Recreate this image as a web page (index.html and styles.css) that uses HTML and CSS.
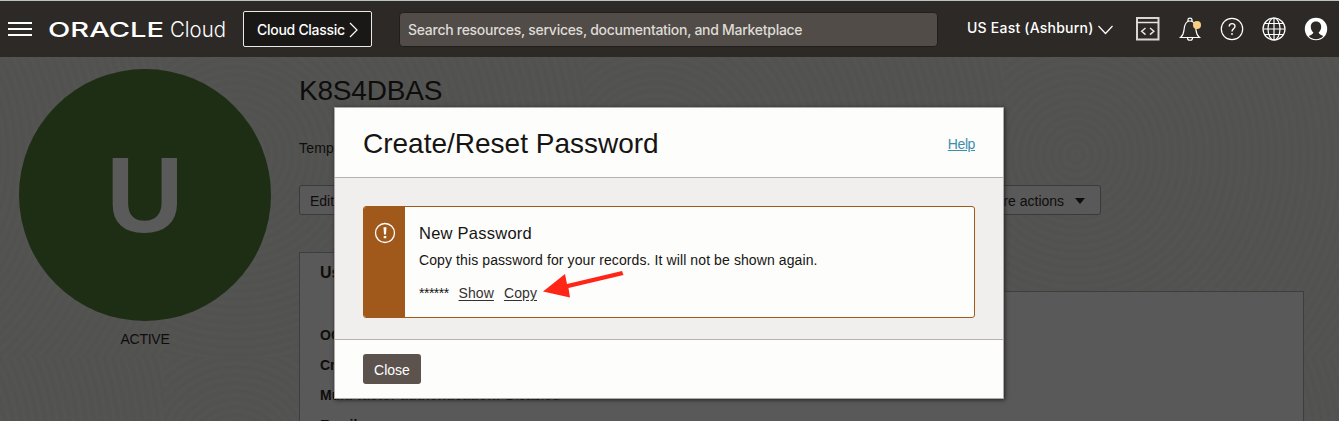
FILE: index.html
```html
<!DOCTYPE html>
<html lang="en">
<head>
<meta charset="utf-8">
<title>Oracle Cloud - K8S4DBAS</title>
<link rel="stylesheet" href="styles.css">
</head>
<body>
<header class="topbar">
  <svg class="menu" width="24" height="16" viewBox="0 0 24 16"><path d="M0 1h24M0 7h24M0 13h24" stroke="#fff" stroke-width="2"/></svg>
  <svg class="logo" width="178" height="24" viewBox="0 0 178 24">
    <text class="logo-oracle" x="-1" y="19" textLength="116" lengthAdjust="spacingAndGlyphs">ORACLE</text>
    <text class="logo-cloud" x="121" y="19" textLength="56" lengthAdjust="spacingAndGlyphs">Cloud</text>
  </svg>
  <button class="classic"><span class="classic-label">Cloud Classic</span><svg width="9" height="16" viewBox="0 0 9 16"><path d="M1 1l7 7-7 7" fill="none" stroke="#fff" stroke-width="1.2"/></svg></button>
  <div class="search"><span class="search-label">Search resources, services, documentation, and Marketplace</span></div>
  <div class="tools">
    <div class="region"><span class="region-label">US East (Ashburn)</span><svg class="chevron" width="15" height="10" viewBox="0 0 15 10"><path d="M.5 1l7 7.500L14.500 1" fill="none" stroke="#fff" stroke-width="1.2"/></svg></div>
    <svg class="tool" width="24" height="24" viewBox="0 0 24 24" fill="none"><path d="M1 1h21.500v21.500H1z" stroke="#d8d7d5" stroke-width="2"/><path d="M1 5.500h22M9.500 11l-3.800 3.300 3.800 3.300M14 11l3.800 3.300-3.800 3.300" stroke="#e6e5e3" stroke-width="1.500"/></svg>
    <svg class="tool" width="24" height="24" viewBox="0 0 24 24" fill="none" stroke="#fff" stroke-width="1.200"><path d="M2.500 20.500h19c-2.500-2-3.200-4-3.500-7.500C17.600 7.500 15.800 4 12 4S6.400 7.500 6 13c-.3 3.500-1 5.500-3.500 7.500zM10 4V2.500Q10 1.200 12 1.200T14 2.500V4M9.500 21c0 3 5 3 5 0"/><circle cx="19" cy="8" r="4" fill="#f8cf82" stroke="none"/></svg>
    <svg class="tool" width="24" height="24" viewBox="0 0 24 24" fill="none" stroke="#fff"><circle cx="12" cy="12" r="10.700" stroke-width="1.200"/><path d="M9.200 9.500C9.200 5.600 15 5.800 15 9.200c0 2.500-3 2.600-3 5.300" stroke-width="1.400"/><circle cx="12" cy="17" r=".9" fill="#fff" stroke="none"/></svg>
    <svg class="tool" width="24" height="24" viewBox="0 0 24 24" fill="none" stroke="#fff" stroke-width="1.200"><circle cx="12" cy="12" r="11"/><ellipse cx="12" cy="12" rx="6" ry="11"/><path d="M12 1v22M1 12h22M3 6.500h18M3 17.500h18"/></svg>
    <svg class="tool" width="24" height="24" viewBox="0 0 24 24"><circle cx="12" cy="12" r="11.200" fill="#fff"/><path d="M12 4.500c-3.700 0-5.200 2.500-5.200 5.300 0 2.400 1 4.500 2.600 5.700-.2 1.700-2.600 2.200-4.600 3.500 3 4.200 11.400 4.200 14.400 0-2-1.300-4.400-1.800-4.600-3.500 1.600-1.200 2.600-3.300 2.600-5.700 0-2.800-1.500-5.300-5.200-5.300z" fill="#2d2926"/></svg>
  </div>
</header>
<main class="page">
  <div class="texture"></div>
  <aside class="profile">
    <div class="avatar"><span class="initial">U</span></div>
    <div class="status">ACTIVE</div>
  </aside>
  <section class="details">
    <h1 class="name">K8S4DBAS</h1>
    <p class="description">Temp</p>
    <div class="actions"><button class="btn">Edit User</button><button class="btn more">More actions <i class="caret"></i></button></div>
    <div class="tab">User Information</div>
    <div class="panel">
      <p class="row"><b>OCID:</b></p>
      <p class="row"><b>Created:</b></p>
      <p class="row"><b class="mfa">Multi-factor authentication:</b> <span class="value">Disabled</span></p>
      <p class="row"><b>Email:</b></p>
    </div>
  </section>
</main>
<div class="modal">
  <div class="modal-head"><h2 class="title">Create/Reset Password</h2><a class="help">Help</a></div>
  <div class="modal-body">
    <div class="notice">
      <div class="notice-icon"><svg width="22" height="22" viewBox="0 0 22 22"><circle cx="11" cy="11" r="9.500" fill="none" stroke="#fff" stroke-width="1.300"/><path d="M9.500 5.200h3l-.5 7.200h-2zM9.700 14h2.600v2.300H9.700z" fill="#fff"/></svg></div>
      <div class="notice-text">
        <h3 class="notice-title">New Password</h3>
        <p class="notice-copy">Copy this password for your records. It will not be shown again.</p>
        <p class="secret"><span class="stars">******</span><a class="link show">Show</a><a class="link">Copy</a></p>
      </div>
    </div>
  </div>
  <div class="modal-foot"><button class="close">Close</button></div>
  <svg class="arrow" width="84" height="32" viewBox="0 0 84 32"><path d="M2 23.500L24 6l2 10L81 3l1.500 4L27.500 20l1.500 9.500z" fill="#ff2617"/></svg>
</div>
</body>
</html>
```
FILE: styles.css
```css
* { box-sizing: border-box; }
body {
  margin: 0;
  height: 421px;
  overflow: hidden;
  position: relative;
  display: flex;
  flex-direction: column;
  background: #535351;
  color: #0e0d0c;
  font: 14px/20px "Liberation Sans", Arial, sans-serif;
}
h1, h2, h3, p { margin: 0; font-weight: 400; }
button { font: inherit; }
svg { display: block; flex: none; }

.topbar {
  flex: none;
  height: 57px;
  border-top: 1px solid #bcc4c0;
  background: #2d2926;
  display: flex;
  align-items: flex-start;
  padding-left: 8px;
  color: #fff;
  font-family: Inter, sans-serif;
  font-weight: 500;
}
.menu { margin-top: 21px; }
.logo { margin: 17px 0 0 17px; overflow: visible; }
.logo text { fill: #fff; }
.logo-oracle { font: 500 20.500px Inter, sans-serif; }
.logo-cloud { font: 300 21.500px Inter, sans-serif; }
.classic {
  width: 129px;
  height: 36px;
  margin: 10px 0 0 16px;
  padding: 1px 0 0 13px;
  border: 1px solid #eceae8;
  border-radius: 2px;
  background: #191816;
  color: #fff;
  display: flex;
  align-items: center;
  gap: 5px;
  text-align: left;
}
.classic-label { width: 87px; white-space: nowrap; letter-spacing: -0.28px; }
.search {
  width: 539px;
  height: 35px;
  margin: 11px 0 0 27px;
  padding: 0 8px;
  border: 1px solid #211e1c;
  border-radius: 4px;
  background: #514c47;
  color: #dedbd7;
  line-height: 34px;
  letter-spacing: -0.28px;
}
.tools { display: flex; margin: 16px 0 0 29px; gap: 18px; }
.region { display: flex; align-items: center; gap: 5px; height: 22px; width: 151px; }
.region-label { width: 126px; white-space: nowrap; letter-spacing: 0.22px; }
.chevron { margin-top: 3px; }

.page { flex: 1; min-height: 0; position: relative; display: flex; align-items: flex-start; padding: 12px 0 0 19px; overflow: hidden; }
.texture {
  position: absolute;
  inset: 0;
  background:
    repeating-radial-gradient(circle at 72px 98px, rgba(70, 70, 68, .2) 0, transparent 4px, rgba(70, 70, 68, .2) 8px) 1004px 0 / 420px 300px,
    #545452;
}
.profile { position: relative; width: 252px; }
.avatar {
  width: 252px;
  height: 252px;
  border-radius: 50%;
  background: #1e2e14;
  display: grid;
  place-items: center;
}
.initial { font: 700 107px/107px "Liberation Sans", Arial, sans-serif; color: #5a5a5a; }
.status { margin-top: 8px; text-align: center; letter-spacing: -0.25px; }
.details { position: relative; margin-left: 28px; width: 1005px; }
.name { font-size: 28px; line-height: 32px; margin-top: 6px; letter-spacing: -0.2px; }
.description { margin-top: 31px; letter-spacing: 0.2px; }
.actions { display: flex; justify-content: space-between; width: 802px; margin-top: 27px; }
.btn {
  height: 30px;
  padding: 2px 10px 0;
  border: 1px solid #3b3a39;
  border-radius: 3px;
  background: #595959;
  color: #0e0d0c;
}
.more { padding-right: 15px; }
.caret {
  display: inline-block;
  margin: 0 0 2px 7px;
  border: 5px solid transparent;
  border-top: 6px solid #0e0d0c;
  border-bottom: 0;
}
.tab {
  position: relative;
  width: 170px;
  height: 40px;
  margin: 37px 0 -1px;
  padding: 10px 20px;
  border: 1px solid #3f3e3e;
  border-bottom: 0;
  background: #595959;
  font-size: 16px;
  font-weight: 700;
}
.panel {
  height: 160px;
  padding: 33px 20px 0;
  border: 1px solid #3f3e3e;
  background: #595959;
}
.row { height: 30px; white-space: nowrap; }
.value { margin-left: 1px; }

.modal {
  position: absolute;
  left: 334px;
  top: 107px;
  width: 670px;
  height: 292px;
  border: 1px solid #aeaaa7;
  background: #fdfdfc;
  box-shadow: 1px 1px 4px #242424;
  color: #161513;
}
.modal-head {
  height: 70px;
  padding: 3px 28px 0;
  border-bottom: 1px solid #b5b2b0;
  display: flex;
  align-items: center;
  justify-content: space-between;
}
.title { font-size: 28px; line-height: 34px; }
.help { color: #3d8eab; letter-spacing: -0.4px; text-decoration: underline; }
.modal-body { height: 162px; padding: 28px 28px 0; background: #f0efee; border-bottom: 1px solid #b5b2b0; }
.notice { display: flex; height: 112px; border: 1px solid #a1591b; border-radius: 3px; background: #fdfdfc; overflow: hidden; }
.notice-icon { width: 41px; background: #a1591b; padding: 15px 0 0 10px; }
.notice-text { padding: 16px 0 0 14px; }
.notice-title { font-size: 16.500px; line-height: 20px; letter-spacing: 0.25px; }
.notice-copy { margin-top: 8px; line-height: 18px; letter-spacing: 0.1px; }
.secret { display: flex; margin-top: 14px; }
.stars { width: 39.500px; letter-spacing: -0.500px; }
.link { text-decoration: underline; text-underline-offset: 2px; color: #343230; letter-spacing: 0.1px; }
.show { margin-right: 10px; }
.modal-foot { padding: 14px 28px 0; }
.close { width: 58px; height: 30px; border: 0; border-radius: 3px; background: #5c534f; color: #fff; padding: 2px 0 0; }
.arrow { position: absolute; left: 206px; top: 160px; }
```
